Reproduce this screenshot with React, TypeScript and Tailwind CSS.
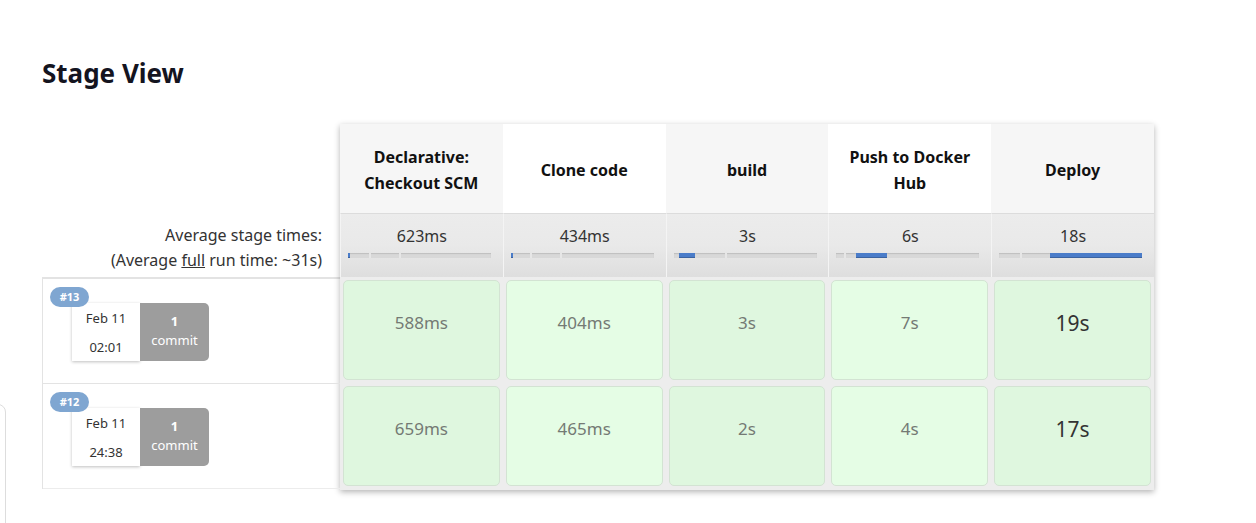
import React from "react";

type Seg = { left: number; width: number };
const stages = [
  { name: ["Declarative:", "Checkout SCM"], avg: "623ms", blue: { left: 0, width: 2 }, divs: [21, 51], odd: true },
  { name: ["Clone code"], avg: "434ms", blue: { left: 0, width: 2 }, divs: [19, 49], odd: false },
  { name: ["build"], avg: "3s", blue: { left: 5, width: 16 }, divs: [51], odd: true },
  { name: ["Push to Docker", "Hub"], avg: "6s", blue: { left: 20, width: 31 }, divs: [8], odd: false },
  { name: ["Deploy"], avg: "18s", blue: { left: 51, width: 92 }, divs: [21], odd: true },
];

const builds = [
  { id: "#13", date: "Feb 11", time: "02:01", cells: ["588ms", "404ms", "3s", "7s", "19s"] },
  { id: "#12", date: "Feb 11", time: "24:38", cells: ["659ms", "465ms", "2s", "4s", "17s"] },
];

function Bar({ blue, divs }: { blue: Seg; divs: number[] }) {
  return (
    <div className="relative ml-[7px] mt-[5px] h-[5px] w-[143px] bg-[#d8d8d8] shadow-[inset_0_1px_1px_rgba(0,0,0,0.12)]">
      {divs.map((d) => (
        <div key={d} className="absolute top-0 h-full w-[2px] bg-[#e6e6e6]" style={{ left: d }} />
      ))}
      <div
        className="absolute top-0 h-full bg-[#4a7cc9] shadow-[inset_0_-1px_0_rgba(0,0,0,0.2)]"
        style={{ left: blue.left, width: blue.width }}
      />
    </div>
  );
}

export default function App() {
  return (
    <div
      className="relative h-[523px] w-[1256px] overflow-hidden bg-white text-[#333]"
      style={{ fontFamily: '"Noto Sans", "Open Sans", sans-serif' }}
    >
      <h2 className="pl-[42px] pt-[57px] text-[26px] font-bold leading-[32px] text-[#14141f]">Stage View</h2>

      <div className="mt-[35px] flex pl-[42px]">
        {/* left column */}
        <div className="flex w-[298px] flex-col">
          <div className="h-[89px]" />
          <div className="flex h-[64px] flex-col items-end pr-[18px] pt-[10px] text-[16px] leading-[25px] text-[#333]">
            <div>Average stage times:</div>
            <div>
              (Average <span className="underline">full</span> run time: ~31s)
            </div>
          </div>
          <div className="border-l border-t-2 border-[#e3e3e3]">
            {builds.map((b, i) => (
              <div
                key={b.id}
                className={`relative h-[105px] pl-[29px] pt-[24px] border-b ${i === 0 ? "border-[#e3e3e3]" : "border-[#ececec]"}`}
              >
                <div className="absolute left-[7px] top-[8px] z-10 flex h-[20px] w-[39px] items-center justify-center rounded-full bg-[#7fa6d1] text-[11px] font-bold text-white">
                  {b.id}
                </div>
                <div className="flex h-[58px]">
                  <div className="flex w-[68px] flex-col items-center bg-white pt-[6px] text-[13px] leading-[18px] text-[#333] shadow-[0_1px_3px_rgba(0,0,0,0.25)]">
                    <div>{b.date}</div>
                    <div className="mt-[11px]">{b.time}</div>
                  </div>
                  <div className="flex w-[69px] flex-col items-center rounded-r-[5px] bg-[#9d9d9d] pt-[9px] text-[13px] leading-[18px] text-white">
                    <div className="font-bold">1</div>
                    <div className="mt-[1px]">commit</div>
                  </div>
                </div>
              </div>
            ))}
          </div>
        </div>

        {/* stage table */}
        <div className="flex w-[814px] shadow-[0_2px_6px_rgba(0,0,0,0.3)]">
          {stages.map((s, ci) => (
            <div key={ci} className="flex w-[163px] flex-col">
              <div
                className={`flex h-[89px] flex-col items-center justify-center pt-[2px] text-[16px] font-bold leading-[26px] text-[#111] ${s.odd ? "bg-[#f6f6f6]" : "bg-white"}`}
              >
                {s.name.map((n) => (
                  <div key={n}>{n}</div>
                ))}
              </div>
              <div className="h-[64px] border-l border-t border-l-[#f4f4f4] border-t-[#dcdcdc] bg-gradient-to-b from-[#ececec] via-[#e9e9e9] to-[#dedede] pt-[10px]">
                <div className="text-center text-[16px] leading-[24px] text-[#333]">{s.avg}</div>
                <Bar blue={s.blue} divs={s.divs} />
              </div>
              <div className="flex flex-col bg-[#ededed] pb-[1px]">
                {builds.map((b, ri) => (
                  <div key={ri} className="h-[106px] p-[3px]">
                    <div
                      className={`flex h-full justify-center rounded-[5px] border border-[#d3e3d3] pt-[30px] leading-[24px] ${s.odd ? "bg-[#dff7df]" : "bg-[#e5fde5]"} ${ci === 4 ? "text-[21px] text-[#333]" : "text-[17px] text-[#747a74]"}`}
                    >
                      {b.cells[ci]}
                    </div>
                  </div>
                ))}
              </div>
            </div>
          ))}
        </div>
      </div>

      {/* partial panel at bottom-left */}
      <div className="absolute left-[-12px] top-[404px] h-[200px] w-[18px] rounded-tr-[8px] border border-[#dddddd]" />
    </div>
  );
}
